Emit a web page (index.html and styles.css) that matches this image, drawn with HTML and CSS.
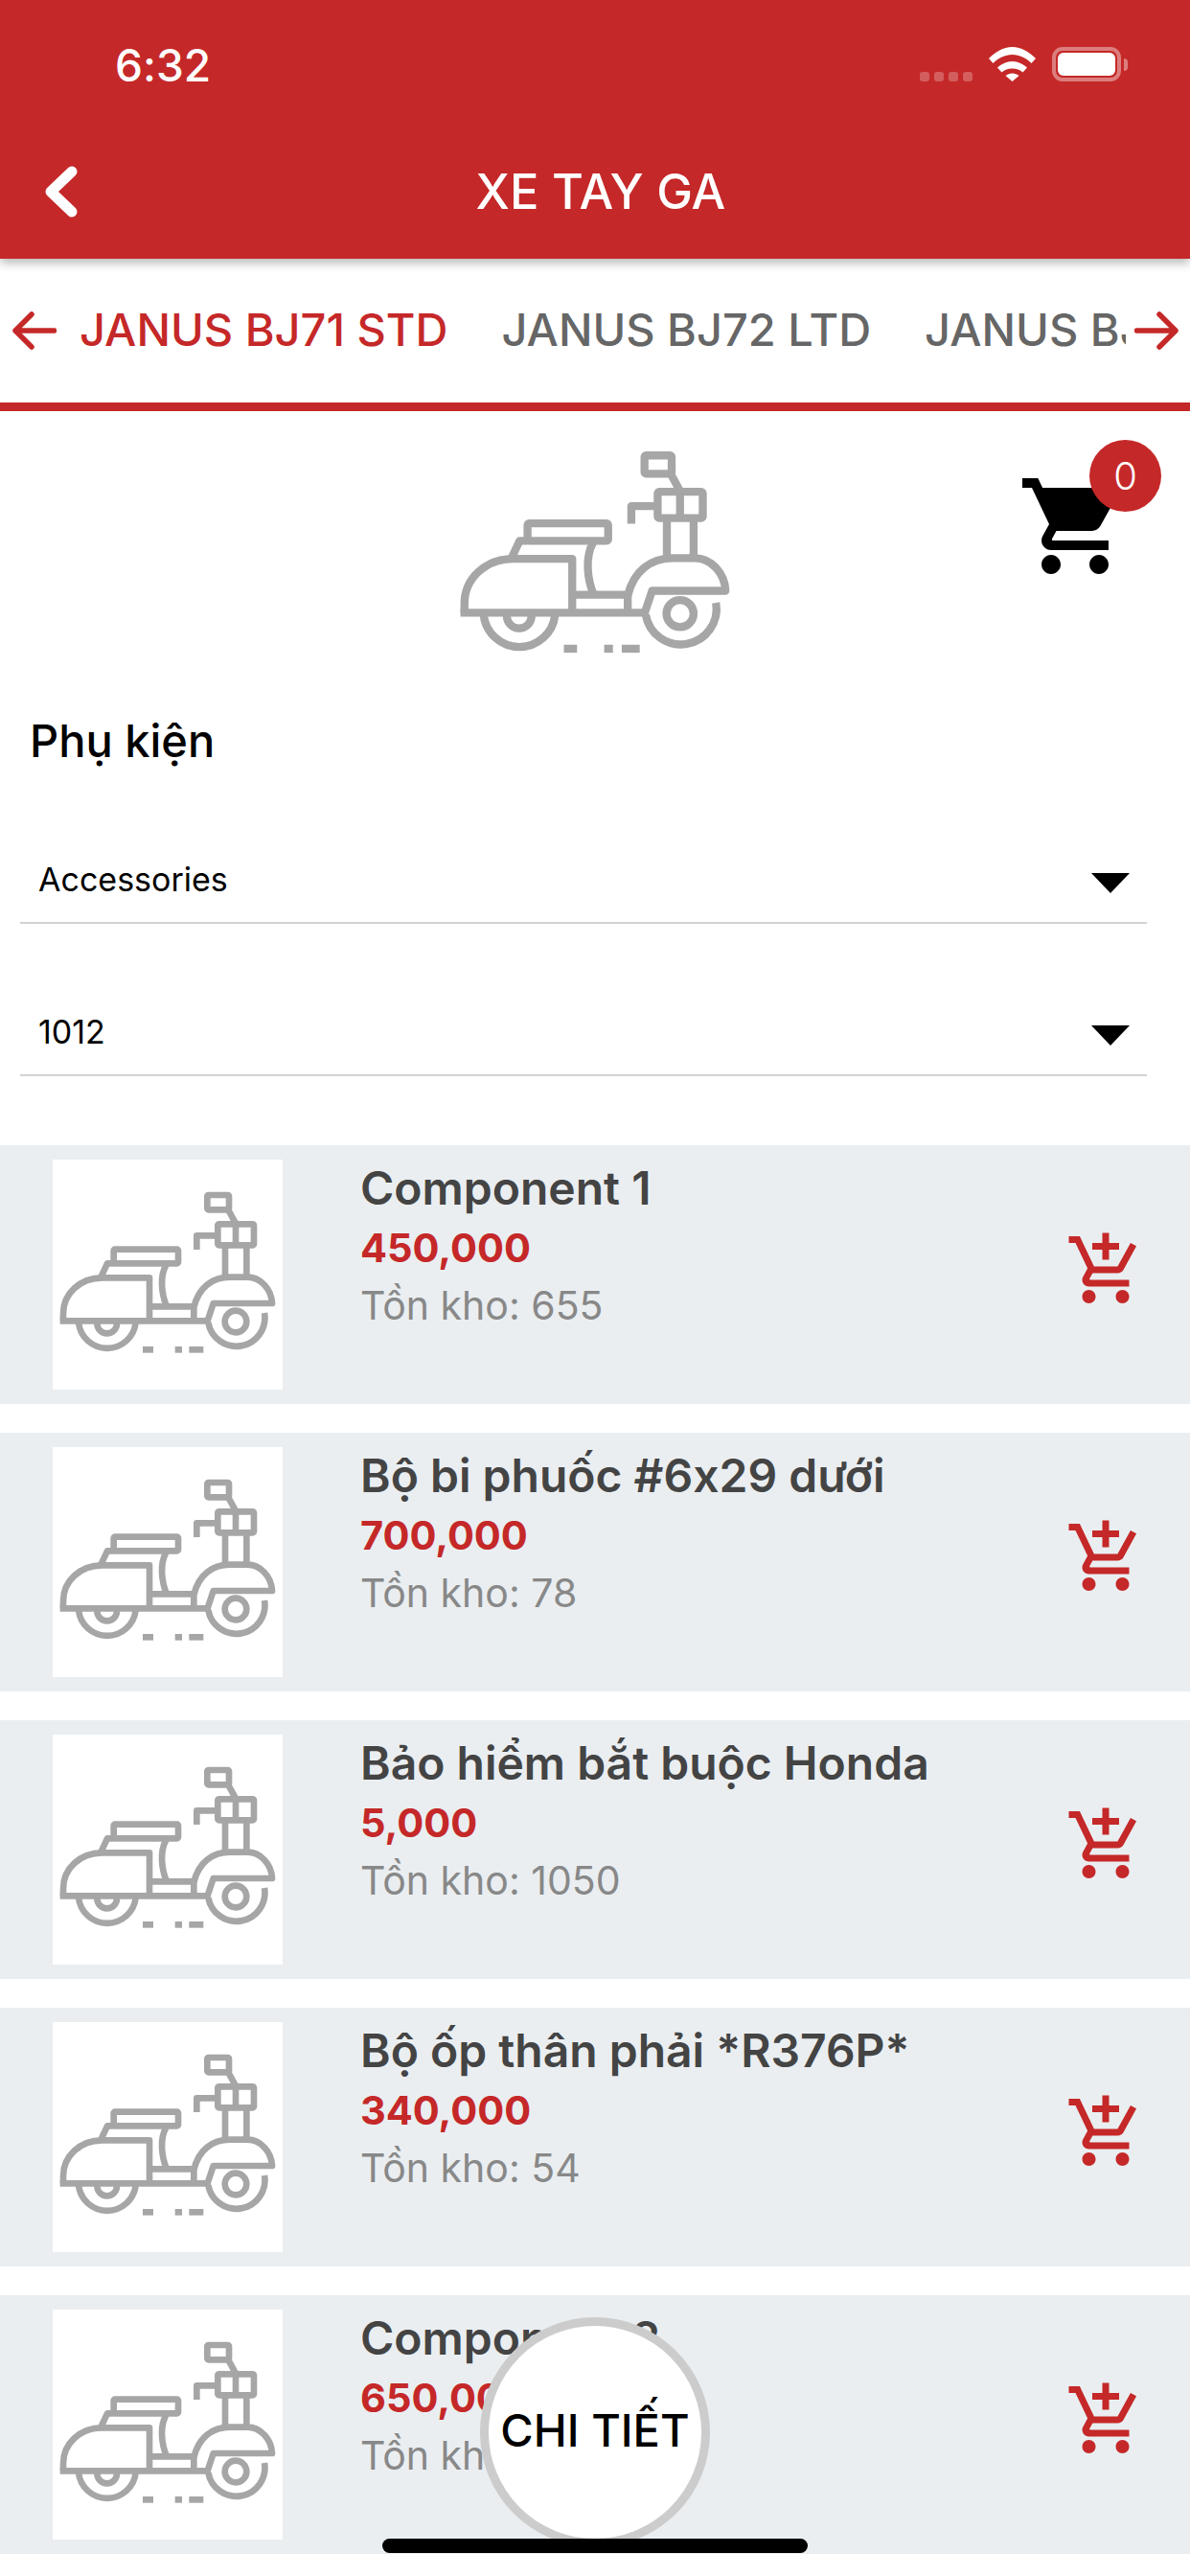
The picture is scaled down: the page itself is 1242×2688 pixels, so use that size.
FILE: index.html
```html
<!DOCTYPE html>
<html lang="vi">
<head>
<meta charset="utf-8">
<title>Xe tay ga</title>
<link rel="stylesheet" href="styles.css">
</head>
<body>
<svg class="defs" width="0" height="0" aria-hidden="true">
  <symbol id="scooter" viewBox="165 90 720 720">
    <g fill="none" stroke="#a6a6a6" stroke-width="20" stroke-linejoin="round">
      <rect x="649" y="201" width="68" height="46" rx="4"/>
      <path d="M715 248L738 290"/>
      <rect x="682" y="292" width="113" height="66" rx="4"/>
      <path d="M738 292V358"/>
      <path d="M616 372V328H682"/>
      <path d="M705 358V458M772 358V458"/>
      <path d="M607 552C622 490 665 458 720 458H775C815 458 850 495 852 540H668L648 600"/>
      <path d="M652 600A89 89 0 1 0 828 570"/>
      <circle cx="738" cy="597" r="34"/>
      <path d="M198 595V572C198 510 250 460 320 460H468V595"/>
      <rect x="356" y="371" width="202" height="44" rx="4"/>
      <path d="M356 415H336L316 458"/>
      <path d="M520 420C500 455 505 510 522 550"/>
      <path d="M470 550H607V595"/>
      <path d="M188 595H650"/>
      <path d="M246 600A90 90 0 0 0 425 600"/>
      <path d="M304 603A31 31 0 0 0 366 603"/>
    </g>
    <g fill="#a6a6a6">
      <rect x="447" y="675" width="33" height="20"/>
      <rect x="548" y="675" width="22" height="20"/>
      <rect x="592" y="675" width="45" height="20"/>
    </g>
  </symbol>
  <symbol id="add-cart" viewBox="0 0 24 24">
    <path d="M11 9h2V6h3V4h-3V1h-2v3H8v2h3v3zm-4 9c-1.1 0-1.99.9-1.99 2S5.9 22 7 22s2-.9 2-2-.9-2-2-2zm10 0c-1.1 0-1.99.9-1.99 2s.89 2 1.99 2 2-.9 2-2-.9-2-2-2zm-9.83-3.25l.03-.12.9-1.63h7.45c.75 0 1.41-.41 1.75-1.03l3.86-7.01L19.42 4h-.01l-1.1 2-2.76 5H8.53l-.13-.27L6.16 6l-.95-2-.94-2H1v2h2l3.6 7.59-1.35 2.45c-.16.28-.25.61-.25.96 0 1.1.9 2 2 2h12v-2H7.42c-.13 0-.25-.11-.25-.25z"/>
  </symbol>
  <symbol id="caret" viewBox="0 0 40 21">
    <path d="M0 0H40L20 21Z"/>
  </symbol>
</svg>

<div class="screen">
  <header class="appbar">
    <div class="status">
      <span class="time">6:32</span>
      <div class="status-icons">
        <div class="signal"><i></i><i></i><i></i><i></i></div>
        <svg class="wifi" viewBox="0 0 49 36"><path d="M0 12C7 5 15 0 24.500 0S42 5 49 12L44.500 17C39 11.500 32 8 24.500 8S10 11.500 4.500 17Z"/><path d="M9 21.500C13 18 18.500 15 24.500 15S36 18 40 21.500L35.500 26.500C32.500 24 29 22.500 24.500 22.500S16.500 24 13.500 26.500Z"/><path d="M17.500 30C19.500 28.500 22 27.500 24.500 27.500S29.500 28.500 31.500 30L24.500 36Z"/></svg>
        <div class="battery"><div class="battery-fill"></div></div>
        <div class="battery-nub"></div>
      </div>
    </div>
    <div class="navrow">
      <svg class="back" viewBox="0 0 36 54"><path d="M28 6L6 27L28 48" /></svg>
      <h1 class="navtitle">XE TAY GA</h1>
    </div>
  </header>

  <nav class="tabs">
    <svg class="arrow" viewBox="0 0 46 40"><path d="M43.500 20H3M20 3L3 20L20 37"/></svg>
    <div class="tablist">
      <span class="tab tab-active">JANUS BJ71 STD</span>
      <span class="tab">JANUS BJ72 LTD</span>
      <span class="tab">JANUS BJ73 LTD</span>
    </div>
    <svg class="arrow" viewBox="0 0 46 40"><path d="M2.500 20H43M26 3L43 20L26 37"/></svg>
  </nav>

  <section class="hero">
    <svg class="hero-img"><use href="#scooter"/></svg>
    <div class="cart">
      <svg class="cart-icon" viewBox="0 0 24 24"><path d="M7 18c-1.100 0-1.990.9-1.990 2S5.900 22 7 22s2-.9 2-2-.9-2-2-2zM1 2v2h2l3.600 7.590-1.350 2.450c-.16.28-.25.61-.25.96 0 1.100.9 2 2 2h12v-2H7.420c-.14 0-.25-.11-.25-.25l.03-.12.9-1.630h7.450c.75 0 1.410-.41 1.750-1.030l3.580-6.490c.08-.14.12-.31.12-.48 0-.55-.45-1-1-1H5.210l-.94-2H1zm16 16c-1.100 0-1.990.9-1.990 2s.89 2 1.990 2 2-.9 2-2-.9-2-2-2z"/></svg>
      <span class="badge">0</span>
    </div>
  </section>

  <h2 class="heading">Phụ kiện</h2>

  <div class="selects">
    <div class="select"><span>Accessories</span><svg class="caret"><use href="#caret"/></svg></div>
    <div class="select"><span>1012</span><svg class="caret"><use href="#caret"/></svg></div>
  </div>

  <ul class="list">
    <li class="item">
      <div class="thumb"><svg class="thumb-img"><use href="#scooter"/></svg></div>
      <div class="info"><div class="name">Component 1</div><div class="price">450,000</div><div class="stock">Tồn kho: 655</div></div>
      <svg class="add"><use href="#add-cart"/></svg>
    </li>
    <li class="item">
      <div class="thumb"><svg class="thumb-img"><use href="#scooter"/></svg></div>
      <div class="info"><div class="name">Bộ bi phuốc #6x29 dưới</div><div class="price">700,000</div><div class="stock">Tồn kho: 78</div></div>
      <svg class="add"><use href="#add-cart"/></svg>
    </li>
    <li class="item">
      <div class="thumb"><svg class="thumb-img"><use href="#scooter"/></svg></div>
      <div class="info"><div class="name">Bảo hiểm bắt buộc Honda</div><div class="price">5,000</div><div class="stock">Tồn kho: 1050</div></div>
      <svg class="add"><use href="#add-cart"/></svg>
    </li>
    <li class="item">
      <div class="thumb"><svg class="thumb-img"><use href="#scooter"/></svg></div>
      <div class="info"><div class="name">Bộ ốp thân phải *R376P*</div><div class="price">340,000</div><div class="stock">Tồn kho: 54</div></div>
      <svg class="add"><use href="#add-cart"/></svg>
    </li>
    <li class="item">
      <div class="thumb"><svg class="thumb-img"><use href="#scooter"/></svg></div>
      <div class="info"><div class="name">Component 2</div><div class="price">650,000</div><div class="stock">Tồn kho: 120</div></div>
      <svg class="add"><use href="#add-cart"/></svg>
    </li>
  </ul>

  <button class="detail">CHI TIẾT</button>
  <div class="homebar"></div>
</div>
</body>
</html>
```
FILE: styles.css
```css
* { box-sizing: border-box; }
html, body { margin: 0; padding: 0; background: #fff; }
.defs { position: absolute; }
.screen {
  position: relative;
  width: 1242px;
  height: 2688px;
  overflow: hidden;
  background: #fff;
  font-family: Inter, "Liberation Sans", Arial, sans-serif;
  font-feature-settings: "calt" 0;
  color: #000;
}

/* app bar */
.appbar {
  height: 270px;
  background: #c52828;
  color: #fff;
  box-shadow: 0 4px 10px rgba(0, 0, 0, .3);
  position: relative;
  z-index: 2;
}
.status {
  height: 135px;
  padding: 36px 65px 0 120px;
  display: flex;
  justify-content: space-between;
  align-items: flex-start;
}
.time {
  font-weight: 500;
  font-size: 46px;
  line-height: 64px;
}
.status-icons { display: flex; align-items: flex-start; padding-top: 13px; }
.signal { display: flex; gap: 5px; margin-top: 26px; margin-right: 17px; }
.signal i { width: 10px; height: 10px; border-radius: 3px; background: rgba(255, 255, 255, .25); }
.wifi { width: 49px; height: 36px; fill: #fff; margin-right: 17px; }
.battery {
  width: 72px;
  height: 36px;
  border: 4px solid rgba(255, 255, 255, .4);
  border-radius: 11px;
  padding: 2px;
}
.battery-fill { width: 100%; height: 100%; background: #fff; border-radius: 6px; }
.battery-nub {
  width: 4px;
  height: 13px;
  margin: 12px 0 0 3px;
  background: rgba(255, 255, 255, .4);
  border-radius: 0 4px 4px 0;
}
.navrow { position: relative; height: 135px; display: flex; justify-content: center; padding: 33px 0 0 12px; }
.back {
  position: absolute;
  left: 47px;
  top: 38px;
  width: 36px;
  height: 54px;
  fill: none;
  stroke: #fff;
  stroke-width: 11;
  stroke-linecap: round;
  stroke-linejoin: round;
}
.navtitle { margin: 0; font-weight: 500; font-size: 50.500px; line-height: 64px; }

/* tabs */
.tabs {
  height: 159px;
  padding: 0 12px 9px 13px;
  border-bottom: 9px solid #c52828;
  display: flex;
  align-items: center;
  justify-content: space-between;
}
.arrow { width: 46px; height: 40px; fill: none; stroke: #c52828; stroke-width: 5.500; stroke-linecap: round; stroke-linejoin: round; flex: none; margin-top: 8px; }
.tablist {
  width: 1092px;
  margin: 0 9px 0 24px;
  padding-top: 7px;
  display: flex;
  gap: 56px;
  overflow: hidden;
  white-space: nowrap;
  flex: none;
}
.tab { font-weight: 500; font-size: 47px; line-height: 60px; color: #666; flex: none; }
.tab-active { color: #c52828; }

/* hero */
.hero { position: relative; height: 301px; display: flex; justify-content: center; }
.hero-img { width: 300px; height: 300px; }
.cart { position: absolute; left: 1062px; top: 30px; width: 150px; height: 120px; }
.cart-icon { position: absolute; left: 0; top: 30px; width: 120px; height: 120px; fill: #000; }
.badge {
  position: absolute;
  left: 75px;
  top: 0;
  width: 75px;
  height: 75px;
  border-radius: 50%;
  background: #c52828;
  color: #fff;
  font-weight: 300;
  font-size: 40px;
  line-height: 75px;
  text-align: center;
}

/* heading + selects */
.heading {
  margin: 13px 0 2px 31px;
  font-weight: 500;
  font-size: 47px;
  line-height: 60px;
}
.selects { padding: 0 45px 0 21px; }
.select {
  height: 159px;
  border-bottom: 2px solid #d2d2d7;
  padding: 0 18px 0 19px;
  display: flex;
  justify-content: space-between;
  align-items: flex-end;
  font-size: 34px;
  line-height: 46px;
}
.select span { margin-bottom: 21px; }
.caret { width: 40px; height: 21px; fill: #000; margin-bottom: 30px; }

/* list */
.list { list-style: none; margin: 72px 0 0; padding: 0; display: flex; flex-direction: column; gap: 30px; }
.item {
  flex: none;
  height: 270px;
  background: #eaeef1;
  padding: 15px 46px 15px 55px;
  display: flex;
  align-items: flex-start;
}
.thumb { width: 240px; height: 240px; background: #fff; flex: none; }
.thumb-img { display: block; width: 240px; height: 240px; }
.info { margin-left: 81px; flex: 1; }
.name { font-size: 48px; font-weight: 600; line-height: 60px; margin-bottom: 2px; color: #444; }
.price { font-size: 41.500px; font-weight: 700; line-height: 60px; color: #c52828; }
.stock { font-size: 41px; line-height: 60px; color: #888; }
.add { width: 84px; height: 84px; margin-top: 73px; fill: #c52828; flex: none; }

/* floating */
.detail {
  position: absolute;
  left: 501px;
  top: 2418px;
  width: 240px;
  height: 240px;
  border-radius: 50%;
  border: 9px solid #ccc;
  background: #fff;
  padding: 0 0 5px;
  font-family: Inter, "Liberation Sans", Arial, sans-serif;
  font-weight: 500;
  font-size: 47px;
  color: #000;
}
.homebar {
  position: absolute;
  left: 399px;
  top: 2649px;
  width: 444px;
  height: 15px;
  border-radius: 8px;
  background: #000;
}
```
